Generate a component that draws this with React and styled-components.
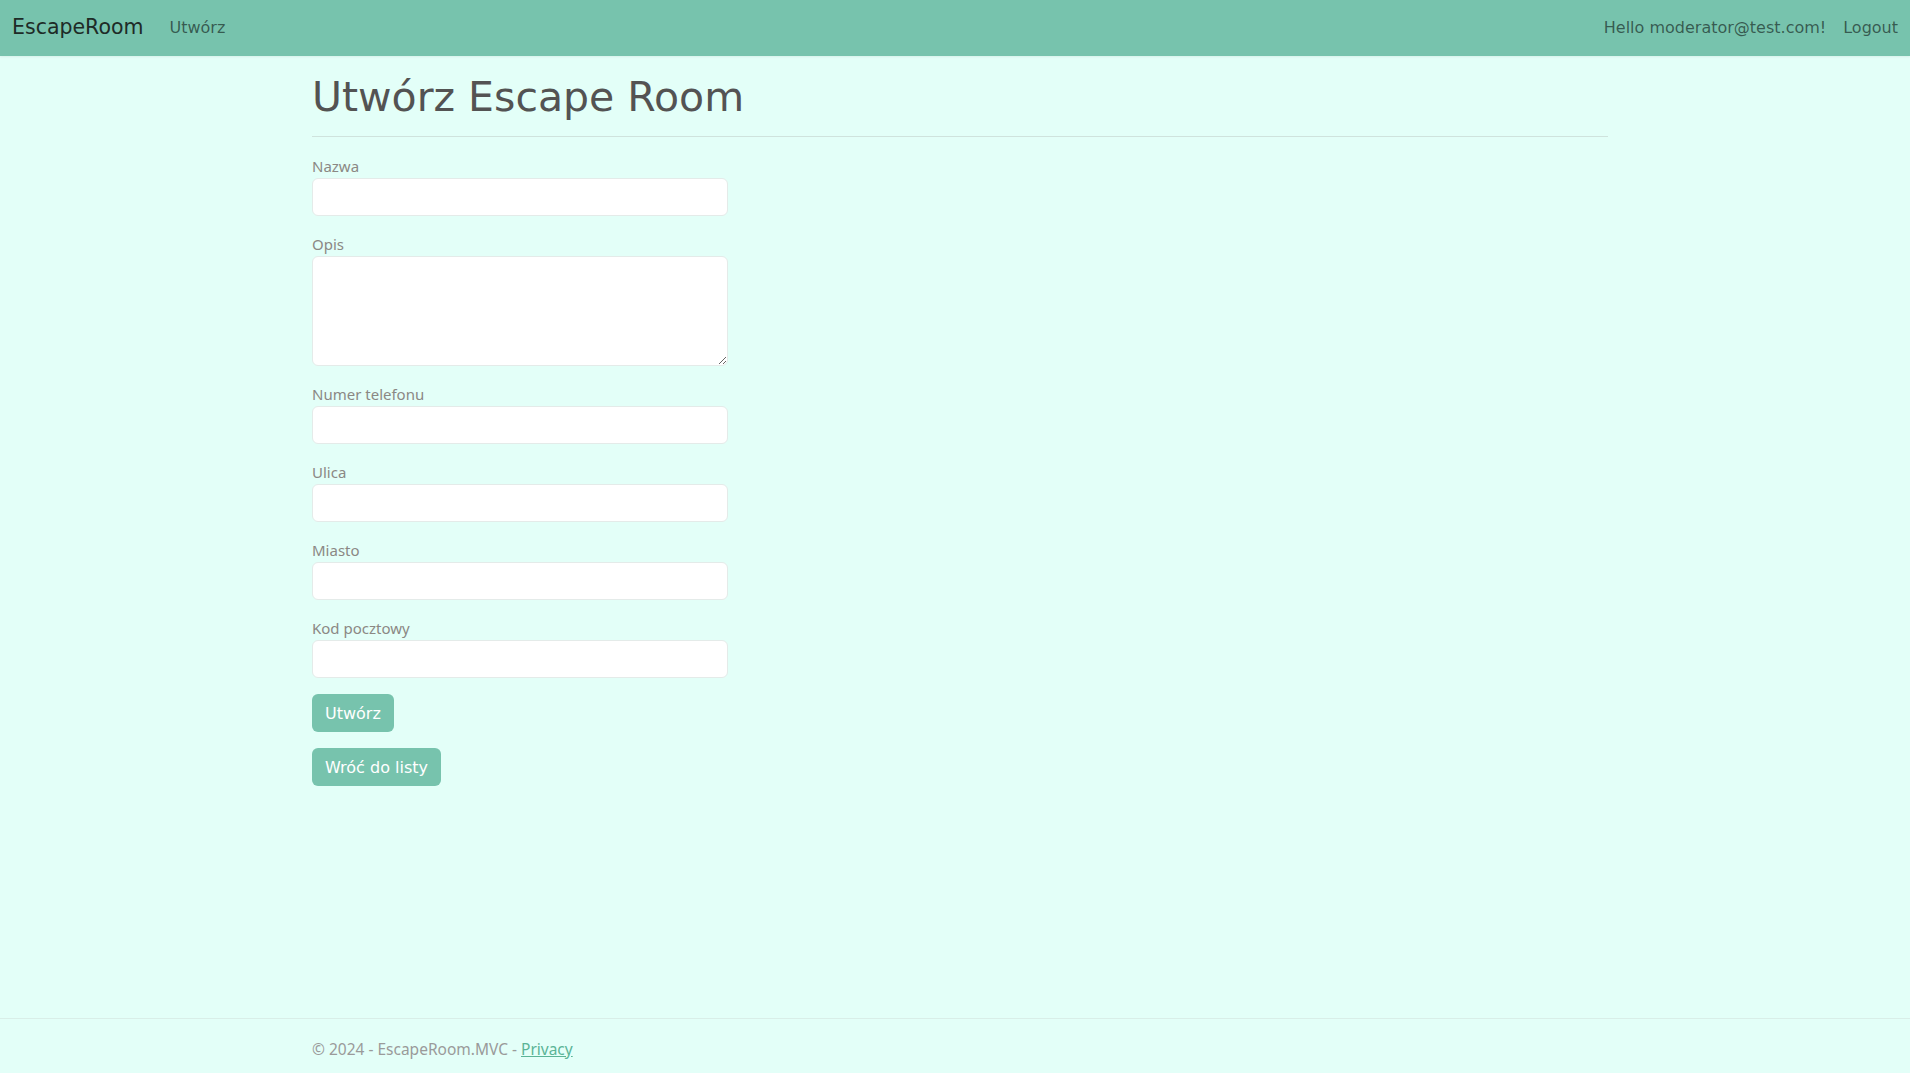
import React from "react";
import styled, { createGlobalStyle } from "styled-components";

const colors = {
  teal: "#77c3ad",
  page: "#e3fff8",
  heading: "#535353",
  label: "#8b8884",
  navText: "rgba(0, 0, 0, 0.55)",
  brand: "#1e2b27",
  rule: "#cfe3dd",
  footerRule: "#d9eee8",
  inputBorder: "#e4ebe9",
  footerText: "#9a9a9a",
  link: "#5bb496"
};

const fields = [
  { name: "Nazwa" },
  { name: "Opis", multiline: true },
  { name: "Numer telefonu" },
  { name: "Ulica" },
  { name: "Miasto" },
  { name: "Kod pocztowy" }
];

export default () => {
  return (
    <Page>
      <GlobalStyle />
      <Navbar>
        <NavGroup>
          <Brand>EscapeRoom</Brand>
          <NavLink>Utwórz</NavLink>
        </NavGroup>
        <NavGroup $right>
          <NavLink>Hello moderator@test.com!</NavLink>
          <NavLink>Logout</NavLink>
        </NavGroup>
      </Navbar>

      <Main>
        <Container>
          <Heading>Utwórz Escape Room</Heading>
          <Rule />
          <Form onSubmit={e => e.preventDefault()}>
            {fields.map(field => (
              <FormGroup key={field.name}>
                <Label>{field.name}</Label>
                {field.multiline ? <TextArea /> : <Input type="text" />}
              </FormGroup>
            ))}
            <Button type="submit">Utwórz</Button>
          </Form>
          <Button type="button">Wróć do listy</Button>
        </Container>
      </Main>

      <Footer>
        <Container>
          © 2024 - EscapeRoom.MVC - <FooterLink href="#">Privacy</FooterLink>
        </Container>
      </Footer>
    </Page>
  );
};

const GlobalStyle = createGlobalStyle`
  * {
    box-sizing: border-box;
  }
  html, body {
    margin: 0;
    padding: 0;
    background: ${colors.page};
    overflow: hidden;
  }
`;

const Page = styled.div`
  display: flex;
  flex-direction: column;
  min-height: 100vh;
  font-family: "Noto Sans", sans-serif;
`;

const Navbar = styled.nav`
  height: 56px;
  background-color: ${colors.teal};
  display: flex;
  align-items: center;
  justify-content: space-between;
  padding: 0 12px 2px 12px;
  box-shadow: 0 1px 2px rgba(0, 0, 0, 0.06);
`;

const NavGroup = styled.div`
  display: flex;
  align-items: center;
  gap: ${p => (p.$right ? "17px" : "26px")};
`;

const Brand = styled.a`
  font-family: "DejaVu Sans", sans-serif;
  font-size: 20.5px;
  color: ${colors.brand};
  cursor: pointer;
`;

const NavLink = styled.a`
  font-family: "DejaVu Sans", sans-serif;
  font-size: 16px;
  color: ${colors.navText};
  cursor: pointer;
`;

const Main = styled.main`
  flex: 1;
  padding-top: 17px;
`;

const Container = styled.div`
  width: 1296px;
  margin-left: 312px;
`;

const Heading = styled.h1`
  margin: 0;
  font-family: "DejaVu Sans", sans-serif;
  font-weight: 400;
  font-size: 41px;
  line-height: 1.2;
  color: ${colors.heading};
`;

const Rule = styled.hr`
  margin: 14px 0 17px 0;
  border: 0;
  border-top: 1px solid ${colors.rule};
`;

const Form = styled.form`
  width: 416px;
  margin-bottom: 16px;
`;

const FormGroup = styled.div`
  margin-bottom: 16px;
`;

const Label = styled.label`
  display: block;
  font-size: 15px;
  line-height: 24px;
  color: ${colors.label};
`;

const Input = styled.input`
  display: block;
  width: 100%;
  height: 38px;
  padding: 6px 12px;
  font-size: 16px;
  background: #fff;
  border: 1px solid ${colors.inputBorder};
  border-radius: 6px;
  outline: none;
`;

const TextArea = styled.textarea`
  display: block;
  width: 100%;
  height: 110px;
  padding: 6px 12px;
  font-size: 16px;
  background: #fff;
  border: 1px solid ${colors.inputBorder};
  border-radius: 6px;
  outline: none;
`;

const Button = styled.button`
  display: inline-block;
  height: 38px;
  padding: 0 13px;
  font-family: "DejaVu Sans", sans-serif;
  font-size: 16px;
  color: #fff;
  background-color: ${colors.teal};
  border: 0;
  border-radius: 6px;
  cursor: pointer;
`;

const Footer = styled.footer`
  height: 55px;
  border-top: 1px solid ${colors.footerRule};
  line-height: 60px;
  overflow: hidden;
  white-space: nowrap;
  font-size: 15.5px;
  color: ${colors.footerText};
`;

const FooterLink = styled.a`
  color: ${colors.link};
  text-decoration: underline;
`;
